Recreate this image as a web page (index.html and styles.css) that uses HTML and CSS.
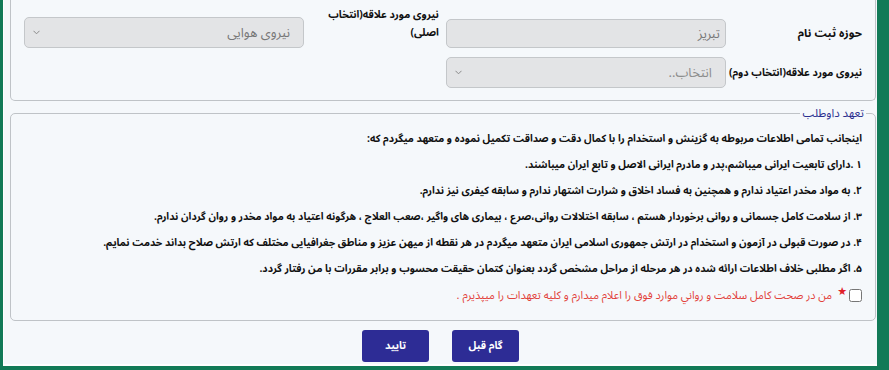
FILE: index.html
```html
<!DOCTYPE html>
<html lang="fa" dir="rtl">
	<head>
		<meta charset="utf-8">
		<title>تعهد داوطلب</title>
		<link rel="stylesheet" href="styles.css">
	</head>
	<body>
		<div class="frame">
			<div class="page">

				<fieldset class="box info">
					<div class="grid">
						<div class="field">
							<label class="lbl lbl-low">حوزه ثبت نام</label>
							<div class="ctrl ctrl-input">تبریز</div>
						</div>
						<div class="field">
							<label class="lbl lbl-top">نیروی مورد علاقه(انتخاب اصلی)</label>
							<div class="ctrl ctrl-select">
								<span>نیروی هوایی</span>
								<svg class="chev" width="7" height="5" viewBox="0 0 7 5"><polyline points="0.5,0.8 3.5,3.8 6.5,0.8" fill="none" stroke="#8a8a8a" stroke-width="1"/></svg>
							</div>
						</div>
						<div class="field">
							<label class="lbl lbl-mid">نیروی مورد علاقه(انتخاب دوم)</label>
							<div class="ctrl ctrl-select">
								<span class="ph">انتخاب..</span>
								<svg class="chev" width="7" height="5" viewBox="0 0 7 5"><polyline points="0.5,0.8 3.5,3.8 6.5,0.8" fill="none" stroke="#8a8a8a" stroke-width="1"/></svg>
							</div>
						</div>
					</div>
				</fieldset>

				<fieldset class="box pledge">
					<legend>تعهد داوطلب</legend>
					<p>اینجانب تمامی اطلاعات مربوطه به گزینش و استخدام را با کمال دقت و صداقت تکمیل نموده و متعهد میگردم که:</p>
					<p>۱ .دارای تابعیت ایرانی میباشم،پدر و مادرم ایرانی الاصل و تابع ایران میباشند.</p>
					<p>۲. به مواد مخدر اعتیاد ندارم و همچنین به فساد اخلاق و شرارت اشتهار ندارم و سابقه کیفری نیز ندارم.</p>
					<p>۳. از سلامت کامل جسمانی و روانی برخوردار هستم ، سابقه اختلالات روانی،صرع ، بیماری های واگیر ،صعب العلاج ، هرگونه اعتیاد به مواد مخدر و روان گردان ندارم.</p>
					<p>۴. در صورت قبولی در آزمون و استخدام در ارتش جمهوری اسلامی ایران متعهد میگردم در هر نقطه از میهن عزیز و مناطق جغرافیایی مختلف که ارتش صلاح بداند خدمت نمایم.</p>
					<p>۵. اگر مطلبی خلاف اطلاعات ارائه شده در هر مرحله از مراحل مشخص گردد بعنوان کتمان حقیقت محسوب و برابر مقررات با من رفتار گردد.</p>
					<div class="agree">
						<input type="checkbox" id="accept">
						<span class="star">★</span>
						<label for="accept">من در صحت کامل سلامت و رواني موارد فوق را اعلام ميدارم و کليه تعهدات را ميپذيرم .</label>
					</div>
				</fieldset>

				<div class="actions">
					<button class="btn">گام قبل</button>
					<button class="btn">تایید</button>
				</div>

			</div>
		</div>
	</body>
</html>
```

FILE: styles.css
```css
html, body { margin: 0; height: 100%; overflow: hidden; }
body { font-family: "Noto Sans Arabic", "DejaVu Sans", sans-serif; font-size: 12px; color: #111; background: #f5f8fb; }

/* green frame around the page */
.frame { height: 370px; box-sizing: border-box; border: solid #127a57; border-width: 0 12px 4px 3px; background: #f5f8fb; }
.page { height: 100%; box-sizing: border-box; border-left: 1px solid #fff; border-bottom: 2px solid #fff; }

.box { margin: 0 1px 0 6px; border: 1px solid #bfc3c7; border-radius: 5px; background: #f5f8fb; min-width: 0; }

/* first box : registration */
.info { border-top: 0; border-radius: 0 0 5px 5px; padding: 6px 13px 12px; }
.grid { display: grid; grid-template-columns: 1fr 1fr; grid-template-rows: 42px 31px; column-gap: 7px; row-gap: 9px; }
.field { display: flex; align-items: flex-end; }
.lbl { flex: 1; font-weight: bold; font-size: 10.4px; line-height: 18px; padding-left: 3px; }
.lbl-top { align-self: flex-start; }
.lbl-low { margin-bottom: 6px; font-size: 11.5px; }
.lbl-mid { align-self: center; white-space: nowrap; }
.ctrl { width: 280px; box-sizing: border-box; height: 31px; border: 1px solid #c4c7ca; border-radius: 5px; background: #e3e4e6; color: #777; display: flex; align-items: center; font-size: 13px; }
.ctrl-input { height: 29px; padding-right: 5px; }
.ctrl-select { padding: 0 13px 0 8px; justify-content: space-between; }
.ph { color: #8c8c8c; }
.chev { display: block; }

/* second box : pledge */
.pledge { margin-top: 3px; padding: 4px 13px 12px; }
.pledge legend { color: #2b2f8f; font-size: 11.5px; line-height: 18px; padding: 0 2px; margin-right: -4px; }
.pledge p { margin: 0; font-weight: bold; font-size: 10.3px; line-height: 26px; white-space: nowrap; }
.agree { display: flex; align-items: center; height: 26px; color: #e2413a; font-size: 11px; }
.agree input { margin: 0 0 0 2px; width: 13px; height: 13px; }
.star { color: #e0202a; font-size: 11px; line-height: 11px; margin: 0 0 7px 5px; }

.actions { display: flex; justify-content: center; gap: 23px; margin-top: 9px; }
.btn { width: 67px; height: 32px; border: 0; border-radius: 3px; background: #2d2c95; color: #fff; font-family: "Noto Sans Arabic", "DejaVu Sans", sans-serif; font-weight: bold; font-size: 10.5px; }
```
